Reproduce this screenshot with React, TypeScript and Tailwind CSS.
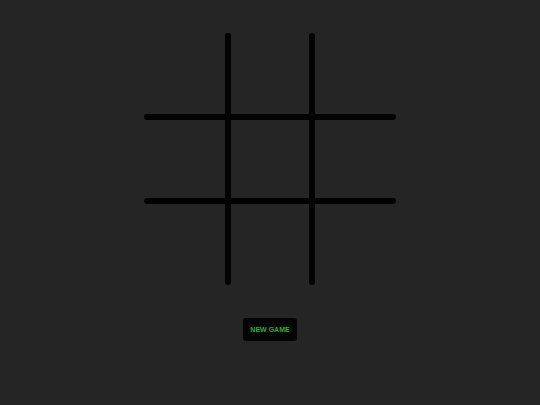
import React, { useState } from 'react';

type Cell = 'X' | 'O' | null;

const Board: React.FC<{ cells: Cell[]; onPlay: (i: number) => void }> = ({ cells, onPlay }) => {
  return (
    <div className="relative w-[252px] h-[252px]">
      <div className="grid grid-cols-3 grid-rows-3 w-full h-full">
        {cells.map((c, i) => (
          <button
            key={i}
            type="button"
            onClick={() => onPlay(i)}
            className="flex items-center justify-center text-5xl font-bold text-gray-300"
          >
            {c}
          </button>
        ))}
      </div>
      {/* grid lines drawn over the cells */}
      <div className="pointer-events-none absolute inset-0 flex justify-center gap-[78px]">
        <div className="w-[6px] h-full rounded-full bg-[#030303]" />
        <div className="w-[6px] h-full rounded-full bg-[#030303]" />
      </div>
      <div className="pointer-events-none absolute inset-0 flex flex-col justify-center gap-[78px]">
        <div className="h-[6px] w-full rounded-full bg-[#030303]" />
        <div className="h-[6px] w-full rounded-full bg-[#030303]" />
      </div>
    </div>
  );
};

export default function App() {
  const [cells, setCells] = useState<Cell[]>(Array(9).fill(null));
  const [xNext, setXNext] = useState(true);

  const play = (i: number) => {
    if (cells[i]) return;
    const next = [...cells];
    next[i] = xNext ? 'X' : 'O';
    setCells(next);
    setXNext(!xNext);
  };

  return (
    <div
      className="min-h-screen w-full bg-[#252525] flex flex-col items-center gap-[33px] pt-[33px]"
      style={{ fontFamily: '"Liberation Sans", Arial, sans-serif' }}
    >
      <Board cells={cells} onPlay={play} />
      <button
        type="button"
        onClick={() => {
          setCells(Array(9).fill(null));
          setXNext(true);
        }}
        className="w-[54px] h-[23px] rounded-[3px] bg-[#050505] text-[7px] font-bold text-[#33aa33] leading-none"
      >
        NEW GAME
      </button>
    </div>
  );
}
